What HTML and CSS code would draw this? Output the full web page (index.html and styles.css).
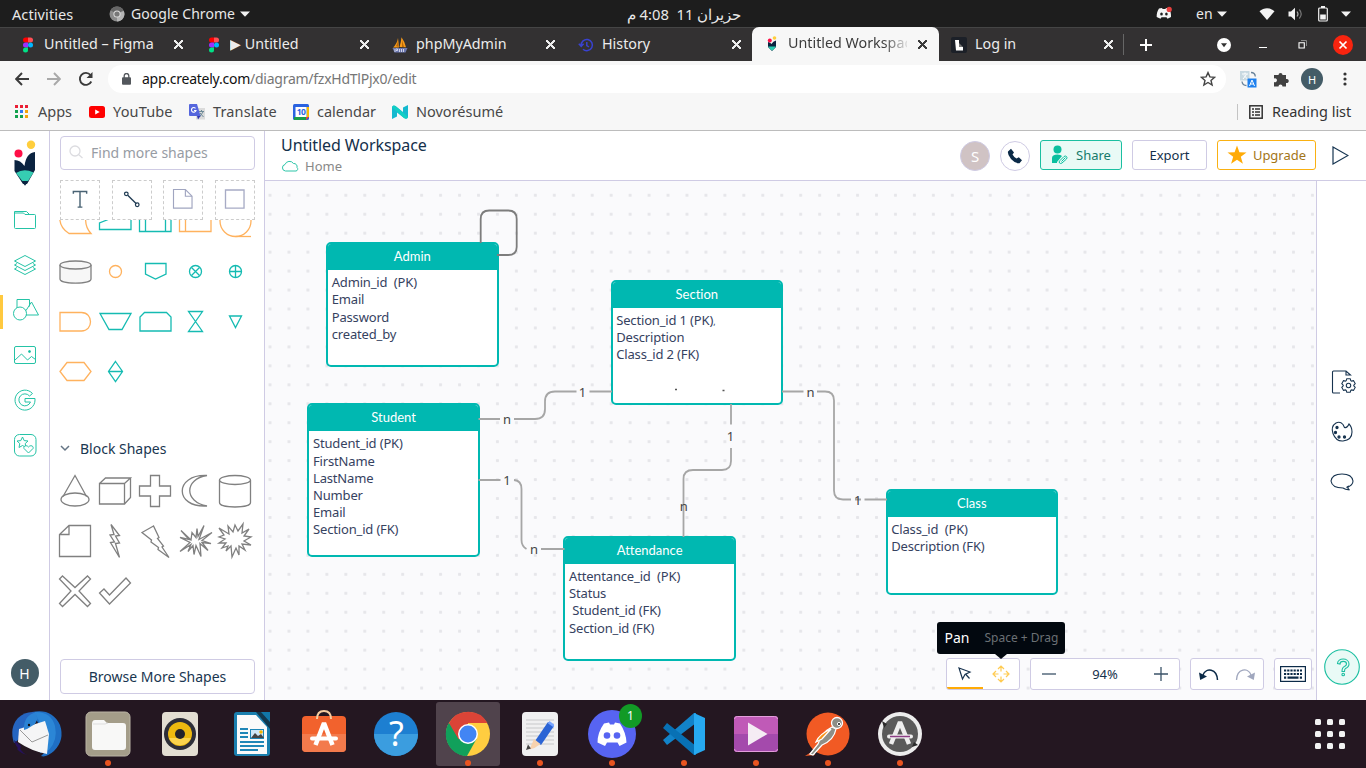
FILE: index.html
```html
<!DOCTYPE html>
<html lang="en">
<head>
<meta charset="utf-8">
<title>Untitled Workspace</title>
<link rel="stylesheet" href="styles.css">
</head>
<body>
<header class="system-bar">
  <span class="sys-activities">Activities</span>
  <svg class="sys-chrome" width="16" height="16" viewBox="0 0 16 16"><circle cx="8" cy="8" r="7.5" fill="#8b8b8b"/><path d="M8 8 1.5 4.2A7.5 7.5 0 0 1 14.5 4.2z" fill="#666"/><path d="M8 8 14.8 5A7.5 7.5 0 0 1 8 15.5z" fill="#b5b5b5"/><circle cx="8" cy="8" r="3.6" fill="#ddd"/><circle cx="8" cy="8" r="2.6" fill="#777"/></svg>
  <span class="sys-app">Google Chrome</span>
  <svg class="sys-caret" width="10" height="6" viewBox="0 0 10 6"><path d="M0 .5h10L5 5.8z" fill="#f2f2f2"/></svg>
  <span class="sys-date" dir="rtl">حزيران 11&nbsp; 4:08 م</span>
  <svg class="sys-discord" width="18" height="16" viewBox="0 0 18 16"><path d="M4 2.5 7 2l.6 1h2.800l.6-1 3 .6c1.600 2.400 2.200 5.600 2 8.400L12.500 12.800l-1-1.500h-5l-1 1.500L1.700 11c-.2-3 .6-6 2.300-8.500z" fill="#f4f4f4"/><ellipse cx="6.500" cy="8" rx="1.300" ry="1.500" fill="#1d1d1d"/><ellipse cx="11.400" cy="8" rx="1.300" ry="1.500" fill="#1d1d1d"/><circle cx="14.200" cy="3.400" r="2.600" fill="#e8403f"/></svg>
  <span class="sys-lang">en</span>
  <svg width="10" height="6" viewBox="0 0 10 6"><path d="M0 .5h10L5 5.800z" fill="#f2f2f2"/></svg>
  <svg class="sys-wifi" width="16" height="14" viewBox="0 0 16 14"><path d="M.5 4.200C5 .3 11 .3 15.500 4.200L8 13z" fill="#f2f2f2"/></svg>
  <svg class="sys-vol" width="16" height="14" viewBox="0 0 16 14"><path d="M.5 4.500H3L7 .8v12.400L3 9.500H.5z" fill="#f2f2f2"/><path d="M9 4.500q2 2.500 0 5" fill="none" stroke="#aaa" stroke-width="1.200"/><path d="M11.300 2.500q3.800 4.500 0 9" fill="none" stroke="#777" stroke-width="1.200"/></svg>
  <svg class="sys-bat" width="10" height="16" viewBox="0 0 10 16"><path d="M3 0h4v2H3z" fill="#f2f2f2"/><rect x=".7" y="2" width="8.600" height="13" rx="1" fill="none" stroke="#f2f2f2" stroke-width="1.200"/><path d="M2.200 8.500h5.600v5H2.200z" fill="#f2f2f2"/></svg>
  <svg class="sys-end" width="10" height="6" viewBox="0 0 10 6"><path d="M0 .5h10L5 5.800z" fill="#f2f2f2"/></svg>
</header>

<nav class="tabs">
  <div class="tab"><svg class="fav" viewBox="0 0 16 16"><path d="M5.500.5H8v5H5.500a2.500 2.500 0 0 1 0-5z" fill="#f00"/><path d="M8 .5h2.500a2.500 2.500 0 0 1 0 5H8z" fill="#ff4f55"/><path d="M8 5.500v5H5.500a2.500 2.500 0 0 1 0-5z" fill="#9b30ff"/><circle cx="10.500" cy="8" r="2.500" fill="#00b6ff"/><path d="M8 10.500V13a2.500 2.500 0 1 1-2.500-2.500z" fill="#00e186"/></svg><span class="tab-title t1">Untitled – Figma</span><i class="x"></i></div>
  <div class="tab"><svg class="fav" viewBox="0 0 16 16"><path d="M5.500.5H8v5H5.500a2.500 2.500 0 0 1 0-5z" fill="#f00"/><path d="M8 .5h2.500a2.500 2.500 0 0 1 0 5H8z" fill="#ff4f55"/><path d="M8 5.500v5H5.500a2.500 2.500 0 0 1 0-5z" fill="#9b30ff"/><circle cx="10.500" cy="8" r="2.500" fill="#00b6ff"/><path d="M8 10.500V13a2.500 2.500 0 1 1-2.500-2.500z" fill="#00e186"/></svg><span class="tab-title t2">▶ Untitled</span><i class="x"></i></div>
  <div class="tab"><svg class="fav" viewBox="0 0 16 16"><path d="M1 10.500Q5 7 6 1l1 9.500zM7.500 10Q9 5 9.500.2q3 4 4.500 10z" fill="#f79a1a"/><path d="M4 9q2-3 2-6l.5 7zM10 10V3l2 7z" fill="#b96b09"/><path d="M.5 11h15l-2 4.500h-11z" fill="#6c78af"/><path d="M3 12v3m1-3h1.500v1.500H4M7.500 12v3m2-3v3m2-3v3" stroke="#e9e9f5" stroke-width=".8" fill="none"/></svg><span class="tab-title t3">phpMyAdmin</span><i class="x"></i></div>
  <div class="tab nosep"><svg class="fav" viewBox="0 0 16 16"><path d="M3.200 8.500A5.600 5.600 0 1 1 5 12.200M.8 6.800l2.400 2.500L5.600 6.800M8.800 5v3.500L11 10" fill="none" stroke="#3942d0" stroke-width="1.500"/></svg><span class="tab-title t4">History</span><i class="x"></i></div>
  <div class="tab active"><svg class="fav" viewBox="0 0 16 16"><path d="M4 6q2.500.5 3.500 2Q9 5 12 4.500V11l-4 4-4-4z" fill="#0b2340"/><path d="M4 10.500h8L8.800 14.300H7.200z" fill="#27cdb1"/><circle cx="5.800" cy="4.500" r="2" fill="#ff0f47"/><circle cx="10.500" cy="2" r="1.800" fill="#ffce3c"/></svg><span class="tab-title t5">Untitled Workspace</span><i class="x"></i></div>
  <div class="tab nosep"><svg class="fav" viewBox="0 0 16 16"><rect width="16" height="16" rx="2" fill="#1c2028"/><path d="M4 3h4v7h4v3.500H5z" fill="#fff"/><path d="M8 6l4 4H8z" fill="#777"/></svg><span class="tab-title t6">Log in</span><i class="x"></i></div>
  <div class="tab-end">
    <svg class="plus" width="12" height="12" viewBox="0 0 12 12"><path d="M6 0v12M0 6h12" stroke="#fff" stroke-width="2"/></svg>
    <svg class="tsearch" width="14" height="14" viewBox="0 0 14 14"><circle cx="7" cy="7" r="7" fill="#fff"/><path d="M4 5.300h6L7 9.200z" fill="#333"/></svg>
    <svg class="wmin" width="8" height="10" viewBox="0 0 8 10"><path d="M0 7.500h8" stroke="#fff"/></svg>
    <svg class="wmax" width="9" height="9" viewBox="0 0 9 9"><path d="M3 .5h5.500V6" fill="none" stroke="#888"/><path d="M1 2.700h5.300V8H1z" fill="none" stroke="#fff" stroke-width="1.100"/></svg>
    <svg class="wclose" width="20" height="20" viewBox="0 0 20 20"><circle cx="10" cy="10" r="10" fill="#f8240f"/><path d="M6.500 6.500l7 7m0-7l-7 7" stroke="#fff" stroke-width="1.700"/></svg>
  </div>
</nav>

<section class="toolbar">
  <svg class="nav-back" width="14" height="14" viewBox="0 0 14 14"><path d="M14 7H1.500M7 1 1.200 7 7 13" fill="none" stroke="#3b3b3b" stroke-width="1.900"/></svg>
  <svg class="nav-fwd" width="14" height="14" viewBox="0 0 14 14"><path d="M0 7h12.500M7 1l5.800 6L7 13" fill="none" stroke="#a9a9a9" stroke-width="1.900"/></svg>
  <svg class="nav-reload" width="16" height="16" viewBox="0 0 16 16"><path d="M13.300 10.500A6 6 0 1 1 12.500 4" fill="none" stroke="#3b3b3b" stroke-width="1.900"/><path d="M14.500 1v6h-6z" fill="#3b3b3b"/></svg>
  <div class="omnibox">
    <svg width="9" height="12" viewBox="0 0 9 12"><rect y="4.200" width="9" height="7.500" rx="1" fill="#53575c"/><path d="M2.200 5V2.800a2.300 2.300 0 0 1 4.600 0V5" fill="none" stroke="#53575c" stroke-width="1.300"/></svg>
    <span class="url">app.creately.com<span class="path">/diagram/fzxHdTlPjx0/edit</span></span>
    <svg class="star" width="16" height="16" viewBox="0 0 16 16"><path d="M8 1.600l1.900 4.300 4.700.4-3.600 3.100 1.100 4.600L8 11.500 3.900 14 5 9.400 1.400 6.300l4.700-.4z" fill="none" stroke="#444" stroke-width="1.400"/></svg>
  </div>
  <svg class="ext-tr" width="17" height="17" viewBox="0 0 17 17"><rect width="9.500" height="9.500" fill="#c8d9e1"/><path d="M2 3h6M5 1.500V3M3 8l3.500-4.500M4 4.500L7.500 8" stroke="#fff" fill="none"/><path d="M11 1.500q4 0 4.300 4M2 10.500q.5 4 4.500 4" fill="none" stroke="#69839a" stroke-width="1.300"/><rect x="7.500" y="7.500" width="9" height="9" fill="#1e80ee"/><path d="M9.500 15 12 9l2.500 6M10.300 13h3.400" stroke="#fff" fill="none"/></svg>
  <svg class="ext-pz" width="16" height="16" viewBox="0 0 16 16"><path d="M1 4h4.500a2 2 0 1 1 4 0H13v4a2.100 2.100 0 1 1 0 4v3.500H9.500a2 2 0 1 0-4 0H1V11a2 2 0 1 0 0-3.500z" fill="#414141"/></svg>
  <span class="avatar sm">H</span>
  <svg class="menu" width="4" height="14" viewBox="0 0 4 14"><g fill="#333"><circle cx="2" cy="2" r="1.600"/><circle cx="2" cy="7" r="1.600"/><circle cx="2" cy="12" r="1.600"/></g></svg>
</section>

<section class="bookmarks">
  <div class="bm b1"><svg width="13" height="13" viewBox="0 0 13 13"><path d="M0 0h3v3H0zM5 0h3v3H5zM10 0h3v3h-3z" fill="#ea1f35"/><path d="M0 5h3v3H0z" fill="#13a14e"/><path d="M5 5h3v3H5z" fill="#2f78f5"/><path d="M10 5h3v3h-3z" fill="#f5a30c"/><path d="M0 10h3v3H0zM5 10h3v3H5z" fill="#13a14e"/><path d="M10 10h3v3h-3z" fill="#f5a30c"/></svg><span>Apps</span></div>
  <div class="bm b2"><svg width="16" height="12" viewBox="0 0 16 12"><rect width="16" height="12" rx="2.500" fill="#f00"/><path d="M6.200 3.500v5l4.500-2.500z" fill="#fff"/></svg><span>YouTube</span></div>
  <div class="bm b3"><svg width="16" height="16" viewBox="0 0 16 16"><rect x="7" y="4" width="9" height="11.500" fill="#dbdbdb"/><path d="M10 7.500h5M12.500 6v1.500M10.500 13l3.500-5M11 9l3.500 4" stroke="#6d8a97" fill="none"/><path d="M1 0h7l3.500 12H1a1 1 0 0 1-1-1V1a1 1 0 0 1 1-1z" fill="#5566dd"/><path d="M8 12h3.500L9 15.500z" fill="#3138b0"/><path d="M6.500 4.300A2.300 2.300 0 1 0 7 6.500H5" fill="none" stroke="#fff" stroke-width="1.100"/></svg><span>Translate</span></div>
  <div class="bm b4"><svg width="16" height="16" viewBox="0 0 16 16"><rect width="16" height="16" rx="1.500" fill="#2b63e0"/><path d="M13.500 3H16v10h-2.500z" fill="#fbbc04"/><path d="M1 13h12v3H1z" fill="#1a9c49"/><path d="M13 13h3l-3 3z" fill="#ea4335"/><path d="M2.500 3h11v10h-11z" fill="#fff"/><text x="8" y="11" class="cal-day">10</text></svg><span>calendar</span></div>
  <div class="bm b5"><svg width="16" height="14" viewBox="0 0 16 14"><path d="M0 2Q1-.5 3.500 1L11 7V2.500L16 0v12q-1 3-4 1L5 7.500v4L0 14z" fill="#14b9cf"/><path d="M0 2Q1-.5 3.500 1L16 12q-1 3-4 1z" fill="#12cfc4"/></svg><span>Novorésumé</span></div>
  <div class="reading"><svg width="14" height="14" viewBox="0 0 14 14"><rect x=".8" y=".8" width="12.400" height="12.400" fill="none" stroke="#333" stroke-width="1.500"/><path d="M3 4h2M3 7h2M3 10h2M6 4h5M6 7h5M6 10h5" stroke="#333" stroke-width="1.400"/></svg><span>Reading list</span></div>
</section>

<main class="app">
  <aside class="rail">
    <svg class="logo" width="22" height="46" viewBox="0 0 22 46"><path d="M.5 20q6 0 10 6Q12 13 21 12v18L13 44H9L.5 31z" fill="#0b2340"/><path d="M2 33Q10 28 19.500 32.500L13.500 42H9z" fill="#36cdb2"/><path d="M7.500 41h7L11 45.800z" fill="#0b2340"/><circle cx="4.500" cy="13.500" r="4" fill="#ff0f47"/><circle cx="17" cy="4.800" r="4.200" fill="#ffce3c"/></svg>
    <svg viewBox="0 0 30 30"><path d="M4.500 8V6.500h12L19 9M4.500 8v14.500q0 1 1 1h19q1 0 1-1v-12q0-1-1-1H15L13.500 8z"/></svg>
    <svg viewBox="0 0 30 30"><path d="M15 5.500 25.500 11 15 16.500 4.500 11zM4.500 15 15 20.500 25.500 15M4.500 15l2.500-1.500M25.500 15 23 13.500M4.500 19 15 24.500 25.500 19M4.500 19 7 17.500M25.500 19 23 17.500"/></svg>
    <span class="rail-on"><svg viewBox="0 0 30 30"><path d="M7 13V4.500h12.500v7M16 15.500l5.500-8.500L28.500 20H16"/><circle cx="10" cy="18.500" r="6.500"/></svg></span>
    <svg viewBox="0 0 30 30"><rect x="4.500" y="6.500" width="21" height="17" rx="1.500"/><path d="M5 20l6.500-6 6 6 4-3.500 4 3"/><circle cx="19.500" cy="11.500" r="1" fill="#0abf9f"/></svg>
    <svg viewBox="0 0 30 30"><path d="M22.500 8.500A10 10 0 1 0 25 15V13.500H15V17h5.500A6 6 0 1 1 19.500 11z"/></svg>
    <svg viewBox="0 0 30 30"><rect x="4.500" y="4.500" width="21.500" height="21.500" rx="5"/><path d="M12.500 7l1.700 3.600 3.800.4-2.800 2.600.8 3.900-3.500-2-3.500 2 .8-3.900L7 11l3.800-.4z"/><path d="M18.500 23l-4.500-4.500c-1-2.500 2.500-4 4.500-1.500 2-2.500 5.500-1 4.500 1.500z" fill="#fff"/></svg>
    <span class="avatar">H</span>
  </aside>

  <aside class="panel">
    <div class="search"><svg width="15" height="15" viewBox="0 0 15 15"><circle cx="6" cy="6" r="5" fill="none" stroke="#dcdce0" stroke-width="1.300"/><path d="M9.800 9.800 13.500 13" stroke="#dcdce0" stroke-width="1.300"/></svg><span>Find more shapes</span></div>
    <div class="quick">
      <svg viewBox="0 0 40 40"><path d="M13 13.500V11h14v2.500M20 11v16.500M17.500 27.500h5" stroke="#4a6374" stroke-width="1.500"/></svg>
      <svg viewBox="0 0 40 40"><path d="M15.500 15l9 9" stroke="#1e3a52" stroke-width="1.400"/><circle cx="14" cy="13.500" r="1.900" stroke="#1e3a52" stroke-width="1.300"/><circle cx="25.500" cy="25" r="1.900" stroke="#1e3a52" stroke-width="1.300"/></svg>
      <svg viewBox="0 0 40 40"><path d="M10 9H22.500L29.500 16V28.500H10zM22.500 9v7h7" stroke="#a0a5c0" stroke-width="1.200"/></svg>
      <svg viewBox="0 0 40 40"><path d="M10 9.500h19.500v19H10z" stroke="#a7abc5" stroke-width="1.400"/></svg>
    </div>
    <div class="shape-scroll">
      <div class="shapes flow">
        <svg class="or" viewBox="0 0 40 50"><path d="M36 37.500H14C2 30 2 14 12 12h23C29 18 29 30 36 37.500z"/></svg>
        <svg viewBox="0 0 40 50"><path d="M4.500 33.500V27L12 24 24 18H36V33.500z"/></svg>
        <svg viewBox="0 0 40 50"><path d="M4.500 14h31.500v21.500H4.500zM10.500 14v21.500M30.500 14v21.500"/></svg>
        <svg class="or" viewBox="0 0 40 50"><path d="M4.500 14h31.500v21.500H4.500zM10.500 14v21.500M5 19h31"/></svg>
        <svg class="or" viewBox="0 0 40 50"><circle cx="20.500" cy="25" r="15.500"/><path d="M20.500 40.500H36"/></svg>
        <svg class="gy" viewBox="0 0 40 50"><path d="M5 19v14c0 5.500 31 5.500 31 0V19" fill="#f7f7f7"/><ellipse cx="20.500" cy="19" rx="15.500" ry="4" fill="#f7f7f7"/></svg>
        <svg class="or" viewBox="0 0 40 50"><circle cx="20.500" cy="25.500" r="6"/></svg>
        <svg viewBox="0 0 40 50"><path d="M10.500 17.500H31v10.500L20.500 33l-10-5z"/></svg>
        <svg viewBox="0 0 40 50"><circle cx="20.500" cy="25.500" r="6"/><path d="M16.500 21.500l8 8m0-8l-8 8"/></svg>
        <svg viewBox="0 0 40 50"><circle cx="20.500" cy="25.500" r="6"/><path d="M20.500 19.500v12M14.500 25.500h12"/></svg>
        <svg class="or" viewBox="0 0 40 50"><path d="M5 16.500H26.500c12 0 12 18.500 0 18.500H5z"/></svg>
        <svg viewBox="0 0 40 50"><path d="M5 17.500h31L27 33.500H14z"/></svg>
        <svg viewBox="0 0 40 50"><path d="M5 35V21l4.500-4.500h22L36 21v14z"/></svg>
        <svg viewBox="0 0 40 50"><path d="M13.500 15.500h14l-14 20h14z"/></svg>
        <svg viewBox="0 0 40 50"><path d="M14.500 20h12l-6 11.500z"/></svg>
        <svg class="or" viewBox="0 0 40 50"><path d="M5 25.500l7-9h17l7 9-7 9H12z"/></svg>
        <svg viewBox="0 0 40 50"><path d="M20.500 15.500l7 10-7 10-7-10zM13.500 25.500h14"/></svg>
      </div>
      <div class="group-head"><svg width="10" height="7" viewBox="0 0 10 7"><path d="M1 1l4 4 4-4" fill="none" stroke="#657585" stroke-width="1.500"/></svg><span>Block Shapes</span></div>
      <div class="shapes block">
        <svg viewBox="0 0 40 50"><ellipse cx="20" cy="33.500" rx="14" ry="6.500"/><path d="M8 30.500 20 9.500l11.500 21"/></svg>
        <svg viewBox="0 0 40 50"><path d="M4.500 17.500h25V38h-25zL10.500 12H35.500L29.500 17.500M35.500 12V31.500L29.500 38"/></svg>
        <svg viewBox="0 0 40 50"><path d="M15.500 9.500h9v10.500h11v10h-11v10.500h-9V30h-11V20h11z"/></svg>
        <svg viewBox="0 0 40 50"><path d="M32 9.500C-1 8-1 42 32 40 9 36 9 13 32 9.500z"/></svg>
        <svg viewBox="0 0 40 50"><ellipse cx="20" cy="14" rx="15.500" ry="4.500"/><path d="M4.500 14v22.500c0 6 31 6 31 0V14"/></svg>
        <svg viewBox="0 0 40 50"><path d="M14 9.500h21.500v31h-31V18.500zV18.500H4.500"/></svg>
        <svg viewBox="0 0 40 50"><path d="M16 8.500l8.500 11-4 .5 4 7-4 .5 4 14-9-15 4-.5-4.500-7 4-.5z"/></svg>
        <svg viewBox="0 0 40 50"><path d="M18.500 10 7 16.500l9.500 7.500-.5 2 7.500 5.500-.5 2L34 41.500l-7-10.500 1.500-1-6-7.500 1.500-1z"/></svg>
        <svg viewBox="0 0 40 50"><path d="M16 24 6 14.500l8 9-9-2 10 5-10 9 11-7-3 7 5-6 1 9 2-9 5 11-1-13 8 7-6-8 9 1-9-3 10-8-13 7 5-14-6 11-1-8-1 9-4-5z"/></svg>
        <svg viewBox="0 0 40 50"><path d="M14 18 4 12l5 7-5 2 6 2-6 4 7 0-4 5 6-2-2 5 5-5 1 11 4-9 3 7 0-9 6 4-3-6 9 1-7-4 7-4-7-1 5-7-7 4 1-9-5 7-3-6-2 7-5-6z"/></svg>
        <svg viewBox="0 0 40 50"><path d="M7.500 10 20 21.500 32.500 10l3 3L24 25l11.500 12.500-3 3L20 28.500 7.500 40.500l-3-3L16 25 4.500 13z"/></svg>
        <svg viewBox="0 0 40 50"><path d="M9 23l5.500 6L31 12l4.500 5L14.500 38l-10-11z"/></svg>
      </div>
    </div>
    <button class="browse">Browse More Shapes</button>
  </aside>

  <section class="work">
    <div class="work-head">
      <div class="titles">
        <div class="ws-title">Untitled Workspace</div>
        <div class="crumb"><svg width="18" height="12" viewBox="0 0 18 12"><path d="M4.500 11A3.300 3.300 0 0 1 4 4.500 4.800 4.800 0 0 1 12.500 3.500 3.200 3.200 0 0 1 16 7.500 2 2 0 0 1 15 11z" fill="none" stroke="#2cc5a8"/></svg><span>Home</span></div>
      </div>
      <span class="user-s">S</span>
      <span class="call"><svg width="16" height="16" viewBox="0 0 16 16"><path d="M1 3.500 4 .8l3 3.700-1.500 2q1.500 2.800 4 4l2.300-1.300 3.200 3-2.500 3Q8 15.500 4 11 .3 6.500 1 3.500z" fill="#0b2a47"/></svg></span>
      <button class="btn share"><svg width="18" height="20" viewBox="0 0 18 20"><circle cx="6.500" cy="4.500" r="4" fill="#0abf9f"/><path d="M1 18v-5q0-3.500 5.500-3.500 3.500 0 4.500 1.500L6 17v1z" fill="#0abf9f"/><path d="M9 15.500l4-4q1.500-1 2.500 0t0 2.500L11 18q-1.500 1-2.500 0t.5-2.500M10.500 16.500l4-4" fill="none" stroke="#0abf9f"/></svg><span>Share</span></button>
      <button class="btn export">Export</button>
      <button class="btn upgrade"><svg width="20" height="20" viewBox="0 0 20 20"><path d="M10 .5l2.400 6.800 7.100.2-5.700 4.300 2.100 7L10 14.700 4.100 18.800l2.100-7L.5 7.500l7.100-.2z" fill="#ffab06"/></svg><span>Upgrade</span></button>
      <svg class="play" width="17" height="19" viewBox="0 0 17 19"><path d="M1 1l15 8.500L1 18z" fill="none" stroke="#163551" stroke-width="1.200"/></svg>
    </div>
    <div class="work-body">
      <div class="canvas">
        <div class="entity admin"><h3>Admin</h3><pre>Admin_id  (PK)
Email
Password
created_by</pre></div>
        <div class="entity section"><h3>Section</h3><pre>Section_id 1 (PK)<small>,</small>
Description
Class_id 2 (FK)</pre></div>
        <div class="entity student"><h3>Student</h3><pre>Student_id (PK)
FirstName
LastName
Number
Email
Section_id (FK)</pre></div>
        <div class="entity attendance"><h3>Attendance</h3><pre>Attentance_id  (PK)
Status
 Student_id (FK)
Section_id (FK)</pre></div>
        <div class="entity class"><h3>Class</h3><pre>Class_id  (PK)
Description (FK)</pre></div>
        <svg class="links" viewBox="265 181 1051 519">
          <path class="loop" d="M480.700 243V219q0-8.500 8.500-8.500h19q8.500 0 8.500 8.500v28q0 8-8.500 8H497"/>
          <path d="M478.500 419H500M514 419h21q10 0 10-10v-7.500q0-10 10-10h21.500M589.500 391.500H612"/>
          <path d="M478.500 480H500.500M514 480q7.500.5 7.500 9v51q0 6 5 9M541 549h23.500"/>
          <path d="M782 391.500h21.500M817 391.500h8q9 0 9 9v90q0 9 9 9h8M855 499.500h6M864.500 499.500H887"/>
          <path d="M731 404v20.500M731 448v13q0 9-9 9h-29q-9.500 0-9.500 9v58"/>
          <g><text x="507" y="424">n</text><text x="582.500" y="396.500">1</text><text x="507" y="484.500">1</text><text x="534" y="554">n</text><text x="810.500" y="396.500">n</text><text x="857.700" y="504.500">1</text><text x="730.500" y="441">1</text><text x="683.700" y="511">n</text></g>
          <path class="specks" d="M675 389.500h2M722.500 390.500h2"/>
        </svg>
        <div class="tip"><b>Pan</b><span>Space + Drag</span></div>
        <div class="controls">
          <div class="ctl mode">
            <svg viewBox="0 0 36 30"><path d="M12 9l11 4-5 2.500L15.500 20z" fill="none" stroke="#17334f" stroke-width="1.200"/><path d="M18.500 15l4 4.500" stroke="#17334f" stroke-width="1.200"/></svg>
            <svg viewBox="0 0 36 30"><path d="M15 10l3-3 3 3M15 20l3 3 3-3M13 12l-3 3 3 3M23 12l3 3-3 3M18 8v4.500M18 17.500V22M11 15h4.500M20.500 15H25" fill="none" stroke="#ffcb51" stroke-width="1.200"/></svg>
          </div>
          <div class="ctl zoom"><svg width="14" height="14" viewBox="0 0 14 14"><path d="M0 7h14" stroke="#3b5368" stroke-width="1.300"/></svg><span>94%</span><svg width="14" height="14" viewBox="0 0 14 14"><path d="M0 7h14M7 0v14" stroke="#3b5368" stroke-width="1.300"/></svg></div>
          <div class="ctl hist"><svg width="20" height="13" viewBox="0 0 20 13"><path d="M4 7C7-1 18 .5 18.500 12" fill="none" stroke="#0b2a47" stroke-width="1.500"/><path d="M0 4.500l8 4L1.200 12z" fill="#0b2a47"/></svg><svg width="20" height="13" viewBox="0 0 20 13"><path d="M16 7C13-1 2 .5 1.500 12" fill="none" stroke="#a0a7be" stroke-width="1.300"/><path d="M20 4.500l-8 4 6.800 3.500z" fill="#a0a7be"/></svg></div>
          <div class="ctl keys"><svg width="26" height="16" viewBox="0 0 26 16"><rect x=".6" y=".6" width="24.800" height="14.800" fill="none" stroke="#0b2a47" stroke-width="1.200"/><path d="M4 4.500h18M4 8h18" stroke="#0b2a47" stroke-width="2.200" stroke-dasharray="2.200 1"/><path d="M4 11.700h2.200M7.500 11.700h11M19.800 11.700H22" stroke="#0b2a47" stroke-width="2.200"/></svg></div>
        </div>
      </div>
      <aside class="right-rail">
        <svg viewBox="0 0 30 30"><path d="M13 26H6.500q-1 0-1-1V5q0-1 1-1H19l4.500 4H19V4"/><g transform="translate(21.500 18.500)"><path d="M-1.700-6.800H1.700L2.300-4.800 3-4.400 5-4.900 6.700-1.900 5.300-.4V.4L6.700 1.900 5 4.900 3 4.400 2.300 4.800 1.700 6.800H-1.700L-2.300 4.800-3 4.400-5 4.900-6.700 1.900-5.300.4V-.4L-6.700-1.900-5-4.900-3-4.400-2.300-4.800z"/><circle r="2.200"/></g></svg>
        <svg viewBox="0 0 30 30"><path d="M16 7.500Q13 4 9 6 3.500 9.500 6 16.500 9 24.500 16 24 25 23 25 15q0-5-3-8-2 4.500-4.500 3.500z"/><g fill="#0b2a47"><circle cx="10" cy="10.500" r="1.100"/><circle cx="8.500" cy="15.500" r="1.100"/><circle cx="12" cy="20" r="1.100"/><circle cx="17.500" cy="20" r="1.100"/></g></svg>
        <svg viewBox="0 0 30 30"><path d="M19.500 20.500Q26 18.500 26 14 25 7 15 7T4 14q1 7 12 7 2 1.500 6.500 2-2-1-1.500-3.500z"/></svg>
        <span class="help"><svg width="36" height="36" viewBox="0 0 36 36"><circle cx="18" cy="18" r="17.300"/><path d="M13.500 14.500C13.500 8.500 25 8.500 25 15q0 3-3.500 4.500-1 .5-1 3H18q0-4 2.500-5 2-1 2-2.500c0-3.500-6.500-3.500-6.500 0z"/><circle cx="19.200" cy="25.500" r="1.300"/></svg></span>
      </aside>
    </div>
  </section>
</main>

<footer class="dock">
  <div class="dk"><svg viewBox="0 0 64 64"><path d="M28 10q20-4 28 13 5 15-6 26-8 7-13 5l6-6-9 2q9-10 4-22z" fill="#1f6fc4"/><path d="M30 10q17-1 21 14 3 14-6 24l-9 3q8-14-2-34z" fill="#2b86d6"/><path d="M10 41Q5 26 14 16 21 9 31 10l-8 17-10 12z" fill="#2565c0"/><path d="M15 27l26-8 4 13-2 20q-16-3-29-12z" fill="#f5f5f6"/><path d="M16 28l12 12 16-7" fill="none" stroke="#999"/><path d="M20 28Q19 13 33 10q-2 3 1 6l-3 6-8 5z" fill="#2b83d4"/><circle cx="25" cy="23" r="1.200" fill="#111"/><path d="M10 38l7 6-1 4q-5-4-6-10zM15 45q4 7 9 8-7-1-11-6z" fill="#26125a"/></svg></div>
  <div class="dk run"><svg viewBox="0 0 64 64"><rect x="10" y="10" width="44" height="44" rx="5" fill="#a49d89" stroke="#bab4a5" stroke-width="1"/><path d="M16 22q0-4 3-4h9l3 3h16q3 0 3 3v21q0 3-3 3H19q-3 0-3-3z" fill="#f8f8f7"/><path d="M17 22h12l3-1" stroke="#ddd" fill="none"/></svg></div>
  <div class="dk"><svg viewBox="0 0 64 64"><rect x="14" y="10" width="36" height="44" rx="4" fill="#e3ded2"/><circle cx="32" cy="32" r="16" fill="#2d2e38"/><circle cx="32" cy="32" r="12" fill="#edb90f"/><path d="M21 36a12 12 0 0 0 22 0z" fill="#fbd44d"/><circle cx="32" cy="32" r="5" fill="#23232b"/></svg></div>
  <div class="dk"><svg viewBox="0 0 64 64"><rect x="14" y="10" width="36" height="44" rx="3" fill="#1a7fae"/><path d="M17 13h19l11 12v27H17z" fill="#fafafa"/><path d="M36 10h6l8 9v8z" fill="#12384e"/><path d="M41 10h9v10z" fill="#1177a8"/><path d="M20 27h8m-8 4h8m-8 4h8m-8 5h24m-24 4h24m-24 4h18" stroke="#1f86b7" stroke-width="2"/><rect x="30.500" y="27.500" width="13" height="9" fill="#cfe7f7" stroke="#1f86b7"/><path d="M31 36l4-5 3 3 3-2 3 4z" fill="#444"/><circle cx="41" cy="30" r="1.800" fill="#f5b400"/></svg></div>
  <div class="dk"><svg viewBox="0 0 64 64"><rect x="10" y="14" width="44" height="36" rx="4" fill="#f2622d"/><path d="M10 32h44v14q0 4-4 4H14q-4 0-4-4z" fill="#f37a4c"/><path d="M25 17q0-8 7-8t7 8" fill="none" stroke="#f6cda0" stroke-width="2"/><path d="M23.500 43 32 21l8.500 22" fill="none" stroke="#fff" stroke-width="4.500" stroke-linejoin="bevel"/><path d="M20 36.500h24" stroke="#fff" stroke-width="4" stroke-linecap="round"/></svg></div>
  <div class="dk"><svg viewBox="0 0 64 64"><circle cx="32" cy="32" r="22" fill="#1d7fd1"/><path d="M10 32a22 22 0 0 0 44 0z" fill="#3b9ddf"/><text x="32.500" y="44" class="q">?</text></svg></div>
  <div class="dk run on"><svg viewBox="0 0 64 64"><circle cx="32" cy="32" r="22" fill="#ffcd40"/><path d="M13 21a22 22 0 0 1 38.500 0H32z" fill="#db4437"/><path d="M32 32 13 21a22 22 0 0 0 18 33l9.500-17z" fill="#11a05b"/><path d="M13 21 22.500 37.500 32 32V21z" fill="#db4437"/><path d="M12.500 21.500 22.500 37.500l9 2L29 54A22 22 0 0 1 12.500 21.500z" fill="#11a05b"/><circle cx="32" cy="32" r="10" fill="#fff"/><circle cx="32" cy="32" r="8.500" fill="#4285f4"/></svg></div>
  <div class="dk run"><svg viewBox="0 0 64 64"><rect x="14" y="10" width="36" height="44" rx="4" fill="#f0f0f1"/><path d="M18 18h28M18 22h28M18 26h28M18 30h28M18 34h28M18 38h28M18 42h28" stroke="#c7c8ca"/><path d="M40 20l6 4-13 19-6-4z" fill="#2b64d5"/><path d="M41.500 19l4.500 3.500v3l-6-4z" fill="#78a5ff"/><path d="M26 37l6.500 5-6 4-5 1.500z" fill="#f7d2ae"/><path d="M20 42.500 18 48l5-1.500z" fill="#444"/></svg></div>
  <div class="dk run"><svg viewBox="0 0 64 64"><circle cx="32" cy="32" r="24" fill="#5764f2"/><path d="M24 21.500l5-1 1 2h4l1-2 5 1q6 9 6.500 19l-7 3.500-2-3.500H27l-2 3.500-7.500-3.500q0-10 6.500-19z" fill="#fff"/><circle cx="27" cy="33.500" r="3.300" fill="#5764f2"/><circle cx="37" cy="33.500" r="3.300" fill="#5764f2"/></svg><em>1</em></div>
  <div class="dk run"><svg viewBox="0 0 64 64"><path d="M11 38l4 5 29-22V11l-2 0z" fill="#1283c9"/><path d="M11 26l4-5 29 23v9l-2 0z" fill="#0871b5"/><path d="M42 11l11 5v32l-11 5z" fill="#27a9f0"/></svg></div>
  <div class="dk run"><svg viewBox="0 0 64 64"><rect x="10" y="14" width="44" height="36" rx="3" fill="#c05ab7"/><path d="M10 32h44v15q0 3-3 3H13q-3 0-3-3z" fill="#a44aac"/><path d="M10.500 17q0-2.500 3-2.500h37q3 0 3 2.500M10.500 47q0 2.500 3 2.500h37q3 0 3-2.500" fill="none" stroke="#e39edb"/><path d="M24 20.500v23L43.500 32z" fill="#f5ecf4"/></svg></div>
  <div class="dk run"><svg viewBox="0 0 64 64"><circle cx="32" cy="32" r="21.500" fill="#f15a24"/><path d="M9 54l8-5 2 4z" fill="#f15a24"/><g stroke="#fff" stroke-width="1.300"><path d="M40 27q-2 11-14 16l-9 10-3-1 8-10q4-12 14-17z" fill="#8f8f87"/><path d="M35 27q-12 5-15 13l6-3z" fill="#f7941e"/><circle cx="41" cy="21" r="5.500" fill="#8d8d86"/></g><circle cx="43" cy="22" r="1.600" fill="#333" stroke="#fff"/></svg></div>
  <div class="dk run"><svg viewBox="0 0 64 64"><circle cx="32" cy="32" r="22" fill="#ededed"/><circle cx="32" cy="32" r="18" fill="#5a5a5a"/><path d="M14 19l5 3-3 4zM50 43l-4-3-2 5z" fill="#2b2b2b"/><path d="M23 42 32 20l9 22" fill="none" stroke="#eee" stroke-width="4.500" stroke-linejoin="bevel"/><path d="M21 34.500h22" stroke="#eee" stroke-width="4" stroke-linecap="round"/><path d="M22 34.500h20" stroke="#8c3f86" stroke-width="1.500"/></svg></div>
  <svg class="apps-grid" width="30" height="30" viewBox="0 0 30 30"><g fill="#f2f2f2"><rect width="6" height="6" rx="1.500"/><rect x="12" width="6" height="6" rx="1.500"/><rect x="24" width="6" height="6" rx="1.500"/><rect y="12" width="6" height="6" rx="1.500"/><rect x="12" y="12" width="6" height="6" rx="1.500"/><rect x="24" y="12" width="6" height="6" rx="1.500"/><rect y="24" width="6" height="6" rx="1.500"/><rect x="12" y="24" width="6" height="6" rx="1.500"/><rect x="24" y="24" width="6" height="6" rx="1.500"/></g></svg>
</footer>
</body>
</html>
```
FILE: styles.css
```css
* { box-sizing: border-box; }
body { margin: 0; width: 1366px; height: 768px; overflow: hidden; font-family: "Noto Sans", "Open Sans", sans-serif; display: flex; flex-direction: column; background: #fff; }
svg { display: block; flex: none; }
span { white-space: nowrap; }
button { font: inherit; padding: 0; background: #fff; }

/* System bar */
.system-bar { height: 28px; flex: none; background: #1d1d1d; border-bottom: 1px solid #454545; display: flex; align-items: center; color: #e8e8e8; font-size: 14px; padding-left: 12px; }
.sys-activities { width: 97px; font-size: 14.500px; letter-spacing: .1px; }
.sys-chrome { margin-right: 6px; }
.sys-app { width: 109px; letter-spacing: .05px; }
.sys-date { width: 118px; margin-left: 375px; text-align: center; font-size: 14.800px; line-height: 20px; }
.sys-discord { margin-left: 412px; }
.sys-lang { width: 21px; margin-left: 23px; }
.sys-wifi { margin-left: 32px; }
.sys-vol { margin-left: 13px; }
.sys-bat { margin-left: 14px; }
.sys-end { margin-left: 13px; }

/* Tab strip */
.tabs { height: 33px; flex: none; background: #333132; display: flex; padding-left: 8px; }
.tab { width: 186px; flex: none; display: flex; align-items: center; padding-left: 12px; color: #ececec; font-size: 14.300px; }
.tab:not(.nosep):not(.active)::after { content: ""; width: 1px; height: 21px; background: #666; margin-left: 7px; }
.fav { width: 16px; height: 16px; margin-right: 8px; }
.tab-title { width: 118px; flex: none; overflow: hidden; line-height: 20px; margin-top: -2px; }
.x { width: 17px; height: 17px; margin-left: 8px; flex: none; background: linear-gradient(45deg, transparent 44%, currentColor 44% 56%, transparent 56%), linear-gradient(-45deg, transparent 44%, currentColor 44% 56%, transparent 56%); background-size: 9px 9px; background-position: center; background-repeat: no-repeat; }
.tab.active { width: 187px; background: #f7f7f7; color: #3c3c3c; border-radius: 7px 7px 0 0; margin-top: -1px; }
.active .tab-title { -webkit-mask-image: linear-gradient(90deg, #000 80%, transparent 103%); mask-image: linear-gradient(90deg, #000 80%, transparent 103%); width: 119px; }
.active .x { margin-left: 7px; }
.active + .tab .x { margin-left: 7px; }
.tab-end { flex: 1; display: flex; align-items: center; border-left: 1px solid #666; margin: 6px 0; margin-left: -2px; padding-left: 16px; }
.tsearch { margin-left: 65px; }
.wmin { margin-left: 28px; }
.wmax { margin-left: 31px; }
.wclose { margin-left: 26px; }

/* Toolbar */
.toolbar { height: 36px; flex: none; background: #f7f7f7; display: flex; align-items: center; padding-left: 15px; }
.nav-fwd { margin-left: 18px; }
.nav-reload { margin-left: 17px; }
.omnibox { margin-left: 14px; width: 1118px; height: 28px; border-radius: 14px; background: #fff; display: flex; align-items: center; padding-left: 14px; }
.url { margin-left: 11px; margin-top: -1px; font-size: 14px; color: #111; letter-spacing: -.25px; }
.path { color: #767676; }
.star { margin-left: auto; margin-right: 10px; }
.ext-tr { margin-left: 14px; }
.ext-pz { margin-left: 16px; }
.avatar { width: 28px; height: 28px; border-radius: 50%; background: #445c67; color: #fff; font-size: 14px; display: grid; place-items: center; }
.avatar.sm { width: 22px; height: 22px; font-size: 11px; margin-left: 12px; }
.menu { margin-left: 20px; }

/* Bookmarks */
.bookmarks { height: 34px; flex: none; background: #f7f7f7; border-bottom: 1px solid #bcbcbc; display: flex; align-items: center; padding: 0 0 4px 15px; color: #484848; font-size: 14.500px; }
.bookmarks span { line-height: 20px; margin-top: -2px; }
.bm { display: flex; align-items: center; }
.b1 { width: 74px; gap: 10px; }
.b2 { width: 100px; gap: 8px; letter-spacing: .15px; }
.b3 { width: 104px; gap: 8px; letter-spacing: .15px; }
.b4 { width: 99px; gap: 8px; }
.b5 { gap: 8px; }
.cal-day { font: bold 8.500px "Noto Sans", sans-serif; fill: #2b63e0; text-anchor: middle; letter-spacing: -.5px; }
.reading { margin-left: auto; width: 129px; border-left: 1px solid #c4c4c4; height: 16px; display: flex; align-items: center; padding-left: 11px; gap: 9px; color: #333; }

/* App */
.app { height: 569px; flex: none; display: flex; }
.rail { width: 50px; border-right: 1px solid #cfcbe4; display: flex; flex-direction: column; align-items: center; }
.rail svg { width: 30px; height: 30px; fill: none; stroke: #25c3a6; stroke-width: 1; margin-bottom: 15px; }
.rail svg.logo { width: 22px; height: 46px; stroke: none; margin: 9px 0 19px; }
.rail-on { width: 50px; height: 45px; display: flex; justify-content: center; background: linear-gradient(#ffc93f, #ffc93f) 0 -1px / 3px 35px no-repeat; margin-left: 1px; }
.rail .avatar { margin-top: auto; margin-bottom: 13px; }
.panel { width: 215px; border-right: 1px solid #cfcbe4; display: flex; flex-direction: column; }
.search { height: 34px; margin: 5px 9px 0 10px; border: 1px solid #cfcbe4; border-radius: 4px; display: flex; align-items: center; gap: 7px; padding: 0 0 1px 8px; color: #979ca4; font-size: 14px; }
.quick { display: flex; justify-content: space-between; margin: 10px 9px 0 10px; }
.quick svg { width: 40px; height: 40px; border: 1px dashed #ccc; fill: none; }
.shape-scroll { flex: 1; overflow: hidden; }
.shapes { display: grid; grid-template-columns: repeat(5, 40px); grid-auto-rows: 50px; padding-left: 5px; }
.shapes svg { width: 40px; height: 50px; fill: none; stroke: #15bbb2; stroke-width: 1.300; }
.flow { margin-top: -24px; }
.shapes .or { stroke: #ffb25e; }
.shapes .gy, .shapes.block svg { stroke: #808080; }
.group-head { display: flex; align-items: center; gap: 10px; margin: 41px 0 7px 10px; height: 22px; font-size: 14px; color: #193650; }
.browse { height: 35px; margin: 0 9px 6px 10px; border: 1px solid #cfcbe4; border-radius: 4px; font-size: 14px; color: #193650; }

.work { flex: 1; display: flex; flex-direction: column; }
.work-head { height: 50px; flex: none; border-bottom: 1px solid #cfcbe4; display: flex; align-items: center; padding-left: 16px; }
.titles { width: 679px; }
.ws-title { font-size: 16px; line-height: 20px; color: #14304b; margin-top: 1px; letter-spacing: -.07px; }
.crumb { display: flex; align-items: center; gap: 6px; font-size: 13px; line-height: 22px; color: #888; }
.user-s, .call { width: 30px; height: 30px; border-radius: 50%; border: 1px solid #cfcbe4; display: grid; place-items: center; }
.user-s { background: #d0c3c4; color: #fff; font-size: 15px; }
.call { margin: 0 10px; }
.btn { height: 30px; border: 1px solid #cfcbe4; border-radius: 3px; font-size: 13px; color: #14304b; display: flex; align-items: center; justify-content: center; margin-top: -2px; }
.share { width: 82px; background: #e9faf6; border-color: #1bbfa1; color: #167a6b; gap: 8px; }
.export { width: 75px; margin-left: 10px; }
.upgrade { width: 99px; margin-left: 10px; border-color: #fab112; color: #a37517; gap: 7px; }
.share span, .upgrade span { margin-left: -1px; }
.play { margin-left: 16px; }
.work-body { flex: 1; display: flex; }
.canvas { width: 1051px; position: relative; background: #fafafc radial-gradient(circle, #e6e6ea 1.300px, transparent 1.900px) -4.480px 4.800px / 18.960px 18.960px; }
.entity { position: absolute; width: 172.700px; border: 2px solid #00b8b1; border-radius: 5px; background: #fff; overflow: hidden; }
.entity h3 { margin: 0; height: 26px; background: #00b8b1; color: #fff; font: 13px/25px Lato, sans-serif; font-variant-ligatures: none; text-align: center; }
.entity pre { margin: 4.300px 0 0 3.700px; font: 13px/17.150px "Noto Sans", sans-serif; letter-spacing: -.16px; color: #36425f; }
.entity small { font-size: 9px; line-height: 1px; }
.admin { left: 61px; top: 61px; height: 125px; }
.section { left: 345.500px; top: 98.700px; height: 125px; }
.student { left: 42.300px; top: 222.200px; height: 153.500px; }
.attendance { left: 298.300px; top: 354.800px; height: 125px; }
.class { left: 620.500px; top: 307.500px; height: 106.500px; }
.links { position: absolute; left: 0; top: 0; width: 1051px; height: 519px; fill: none; stroke: #a6a6a6; stroke-width: 1.800; }
.links .loop { stroke: #7d7d7d; }
.links .specks { stroke: #555; stroke-width: 1.500; }
.links text { fill: #444; stroke: none; font-size: 13px; text-anchor: middle; }
.tip { position: absolute; left: 672px; top: 441px; width: 128px; height: 32px; border-radius: 3px; background: #02080f; display: flex; align-items: center; padding: 0 0 2px 7.500px; gap: 15px; font-size: 12px; color: #6b7075; z-index: 2; }
.tip b { font-weight: 400; font-size: 14px; color: #fff; }
.tip::after { content: ""; position: absolute; left: 58px; top: 32px; border: 6px solid transparent; border-top: 5px solid #02080f; border-bottom: 0; }
.controls { position: absolute; right: 4px; bottom: 10px; display: flex; gap: 10px; }
.ctl { height: 32px; border: 1px solid #cfcbe4; border-radius: 3px; background: #fff; display: flex; align-items: center; color: #14304b; font-size: 13px; }
.mode { width: 74px; background: linear-gradient(#ffab06, #ffab06) 0 100% / 36px 2px no-repeat #fff; }
.mode svg { width: 36px; height: 30px; }
.zoom { width: 150px; justify-content: space-between; padding: 0 11px; }
.hist { width: 74px; justify-content: space-between; padding: 0 8px; }
.keys { width: 38px; justify-content: center; }
.right-rail { width: 50px; border-left: 1px solid #cfcbe4; display: flex; flex-direction: column; align-items: center; padding-top: 186px; }
.right-rail svg { width: 30px; height: 30px; margin-bottom: 20px; fill: none; stroke: #17334f; stroke-width: 1.100; }
.right-rail .help { margin-top: auto; margin-bottom: 15px; }
.right-rail .help svg { width: 36px; height: 36px; margin: 0; fill: #e9faf6; stroke: #1bbfa1; }

/* Dock */
.dock { height: 68px; flex: none; background: #241721; display: flex; align-items: flex-start; padding: 2px 0 0 4px; gap: 8px; }
.dk { width: 64px; height: 64px; position: relative; border-radius: 3px; }
.dk svg { width: 64px; height: 64px; }
.dk.on { background: #50434c; }
.dk.run::after { content: ""; position: absolute; left: 29px; bottom: 0; width: 6px; height: 6px; border-radius: 50%; background: #e95420; }
.dk em { position: absolute; right: 2px; top: 2px; width: 23px; height: 24px; border-radius: 50%; background: #129a26; color: #fff; font: 12px/24px "Noto Sans", sans-serif; text-align: center; }
.q { font: 34px "Noto Sans", sans-serif; fill: #fff; text-anchor: middle; }
.apps-grid { margin: 17px 21px 0 auto; }
```
